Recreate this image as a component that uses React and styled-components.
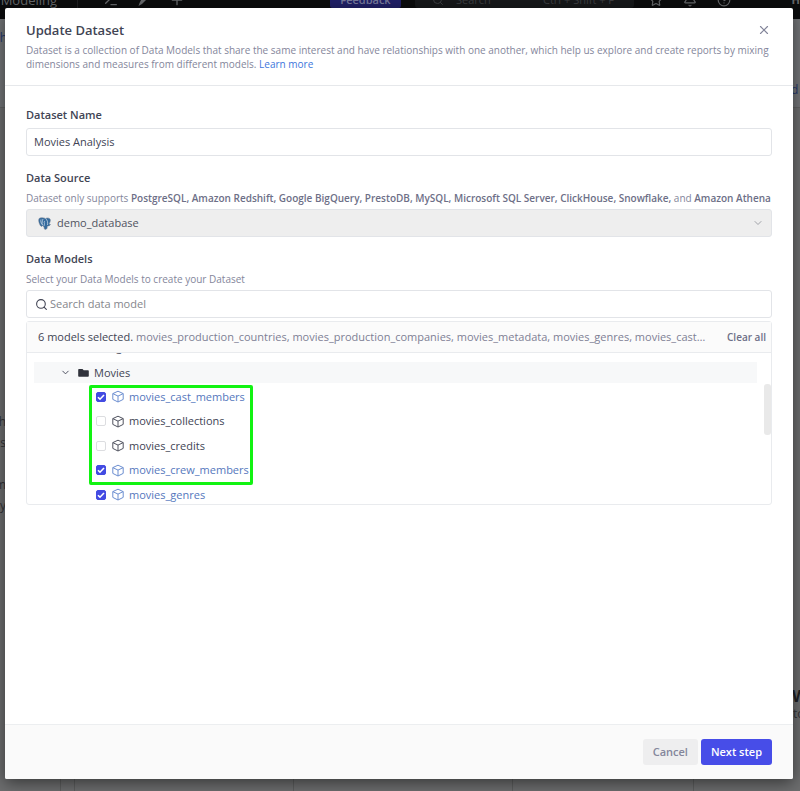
import React, { useState } from "react";
import styled, { createGlobalStyle, css } from "styled-components";
import { Terminal, Plus, Search, Star, Bell, CircleHelp, X, ChevronDown } from "lucide-react";

const Global = createGlobalStyle`
  * { box-sizing: border-box; }
  body { margin: 0; background: #6b6b6b; font-family: "Open Sans", "Noto Sans", sans-serif; font-size: 11px; line-height: 18px; color: #414454; }
  button, input, select { font: inherit; color: inherit; }
`;

const Page = styled.div`
  position: fixed;
  inset: 0;
  overflow: hidden;
  background: #6d6e6f;
  display: flex;
  flex-direction: column;
`;
const NavBar = styled.nav`
  display: flex;
  align-items: center;
  flex: none;
  height: 38px;
  margin-top: -19px;
  background: #0b0c0d;
  color: #66686b;
`;
const NavTitle = styled.div`
  width: 78px;
  border-right: 1px solid #1e1f21;
  font-size: 13px;
  text-indent: -6px;
  white-space: nowrap;
`;
const NavTools = styled.div`
  display: flex;
  align-items: center;
  flex: 1;
  gap: 18px;
  padding-left: 25px;
`;
const FeedbackButton = styled.button`
  width: 71px;
  height: 16px;
  padding: 0;
  border: 0;
  border-radius: 2px;
  background: #202067;
  color: #777a9c;
  font-weight: 600;
  line-height: 16px;
`;
const NavSearch = styled.div`
  display: flex;
  align-items: center;
  gap: 12px;
  width: 219px;
  height: 16px;
  margin-left: 14px;
  padding: 0 20px 0 17px;
  border-radius: 3px;
  background: #16181a;
  color: #3c3e41;
  span:last-child { margin-left: auto; }
`;
const NavActions = styled.div`
  display: flex;
  align-items: center;
  gap: 20px;
  width: 166px;
  padding-left: 15px;
  b { margin-left: auto; }
`;
const Backdrop = styled.div`
  display: flex;
  flex: 1;
  justify-content: space-between;
  background: linear-gradient(#737578 88px, #626364 88px, #626364 89px, #6d6e6f 89px);
`;
const BackColumn = styled.div`
  position: relative;
  width: 30px;
`;
const BackText = styled.span`
  position: absolute;
  top: ${(p) => p.$y}px;
  ${(p) => (p.$right ? "left" : "right")}: ${(p) => p.$x}px;
  color: ${(p) => p.$color || "#333438"};
  font-size: ${(p) => p.$size || 12}px;
  font-weight: ${(p) => (p.$bold ? 700 : 400)};
  white-space: nowrap;
`;
const BackGrid = styled.div`
  display: grid;
  flex: none;
  grid-template-columns: 61fr 14fr 219fr 219fr 181fr 106fr;
  height: 30px;
  div { border-right: 1px solid #5d5e5e; }
`;

const Overlay = styled.div`
  position: fixed;
  inset: 0;
  display: flex;
  padding: 8px 7px 12px 5px;
`;
const Dialog = styled.section`
  display: flex;
  flex: 1;
  flex-direction: column;
  min-width: 0;
  overflow: hidden;
  border-radius: 2px;
  background: #fff;
  box-shadow: 0 4px 16px rgba(0, 0, 0, 0.5);
`;
const Header = styled.header`
  padding: 12px 16px 14px 21px;
  border-bottom: 1px solid #e6e8eb;
`;
const TitleRow = styled.div`
  display: flex;
  align-items: center;
  justify-content: space-between;
  padding-right: 5px;
`;
const Title = styled.h1`
  margin: 0;
  font-size: 13px;
  font-weight: 600;
  line-height: 20px;
`;
const Intro = styled.p`
  margin: 3px 0 0;
  color: #84869b;
  font-size: 10px;
  line-height: 14px;
  a { color: #3d76dc; text-decoration: none; }
`;
const CloseButton = styled.button`
  display: flex;
  padding: 0 1px;
  border: 0;
  background: none;
  color: #84869b;
`;
const Body = styled.form`
  display: flex;
  flex: 1;
  flex-direction: column;
  padding: 19px 21px;
`;
const Label = styled.label`
  font-weight: 600;
  line-height: 20px;
  ${(p) => p.$spaced && css`margin-top: 12px;`}
`;
const Hint = styled.p`
  margin: 2px 0 3px;
  color: #84869b;
  font-size: 10px;
  line-height: 16px;
  b { color: #6d6f87; font-weight: 600; }
`;
const field = css`
  height: 28px;
  border: 1px solid #e2e4e8;
  border-radius: 3px;
`;
const TextInput = styled.input`
  ${field}
  width: 100%;
  margin-top: 3px;
  padding: 0 7px 1px;
  background: #fff;
`;
const SelectBox = styled.div`
  ${field}
  display: flex;
  align-items: center;
  gap: 6px;
  padding: 0 7px 0 11px;
  background: #eee;
  color: #a0a2a8;
`;
const Select = styled.select`
  flex: 1;
  padding: 0;
  border: 0;
  appearance: none;
  background: none;
  color: #50535f;
  opacity: 1;
`;
const SearchBox = styled.div`
  ${field}
  display: flex;
  align-items: center;
  gap: 2px;
  padding: 0 8px;
  input { flex: 1; min-width: 0; padding: 0; border: 0; outline: 0; background: none; }
  input::placeholder { color: #85868c; opacity: 1; }
`;
const Picker = styled.div`
  margin-top: 3px;
  border: 1px solid #e9ebee;
  border-radius: 3px;
`;
const Summary = styled.div`
  display: flex;
  align-items: center;
  height: 31px;
  padding: 0 5px 0 11px;
  border-bottom: 1px solid #e9ebee;
  background: #fbfbfb;
`;
const SummaryText = styled.div`
  flex: 1;
  min-width: 0;
  overflow: hidden;
  color: #7e8095;
  text-overflow: ellipsis;
  white-space: nowrap;
  span { color: #414454; }
`;
const ClearButton = styled.button`
  padding: 0;
  margin-left: 18px;
  border: 0;
  background: none;
  color: #6d6f87;
  font-size: 10px;
  font-weight: 600;
`;
const TreeArea = styled.div`
  position: relative;
  height: 151px;
  padding: 9px 14px 0 7px;
  overflow: hidden;
`;
const ScrollThumb = styled.div`
  position: absolute;
  top: 31px;
  right: 0;
  width: 7px;
  height: 51px;
  border-radius: 3px;
  background: #e9e9e9;
`;
const ClippedRow = styled.div`
  position: absolute;
  top: -15px;
  left: 43px;
`;
const FolderRow = styled.div`
  display: flex;
  align-items: center;
  height: 21px;
  margin-bottom: 1px;
  padding-left: 26px;
  background: #f7f8f9;
  svg:first-child { margin-right: 7px; }
  span { margin-left: 5px; }
`;
const ModelList = styled.div`
  position: relative;
  display: flex;
  flex-direction: column;
  align-items: flex-start;
  padding-left: 62px;
`;
const Highlight = styled.div`
  position: absolute;
  top: 1px;
  left: 55px;
  width: 164px;
  height: 100px;
  border: 3px solid #12f312;
  border-radius: 2px;
  pointer-events: none;
`;
const ModelRow = styled.label`
  display: grid;
  grid-template-columns: 10px 12px auto;
  align-items: center;
  column-gap: 6px;
  height: ${(p) => (p.$tall ? 25 : 24)}px;
  color: ${(p) => (p.$on ? "#5577bd" : "#414454")};
  svg { color: ${(p) => (p.$on ? "#6c8ed0" : "#50535f")}; }
  span { margin-left: -1px; }
`;
const Check = styled.input`
  width: 10px;
  height: 10px;
  margin: 0;
  border: 1px solid #dcdde0;
  border-radius: 2px;
  appearance: none;
  background: #fff;
  &:checked {
    border-color: #434be2;
    background: #434be2 url("data:image/svg+xml,%3Csvg xmlns='http://www.w3.org/2000/svg' viewBox='0 0 10 10'%3E%3Cpath d='M2 5.2l2 2L8 3' fill='none' stroke='white' stroke-width='1.6'/%3E%3C/svg%3E") center / 10px;
  }
`;
const Footer = styled.footer`
  display: flex;
  align-items: center;
  justify-content: flex-end;
  gap: 3px;
  height: 55px;
  padding: 0 21px;
  border-top: 1px solid #eceef0;
  background: #fafafa;
`;
const Action = styled.button`
  height: 26px;
  padding: 0 10px;
  border: 0;
  border-radius: 3px;
  background: ${(p) => (p.$primary ? "#474de8" : "#eeeeef")};
  color: ${(p) => (p.$primary ? "#fff" : "#84869b")};
  font-weight: 600;
`;

const PostgresLogo = () => (
  <svg width="13" height="13" viewBox="0 0 26 26" aria-hidden="true">
    <path d="M4 2C0 3 1 10 4 16c2 4 4 3 5 1 1 2 2 2 3 2 0 6 2 7 5 5 2-1 1-4 2-6 3 0 5-1 6-3l-3-1c3-5 4-9 1-11-3-2-6-1-8 0-4-2-8-2-11-1z" fill="#356b9e" stroke="#7b8794" strokeWidth="1" />
    <path d="M9 16c-1-3-1-8 1-12M15 3c4 3 5 8 4 13M12 18l1-5c-1-2-1-4 1-5M6 5c-1 3 0 7 2 10" fill="none" stroke="#d5e2ee" strokeWidth="1.4" />
  </svg>
);
const CubeIcon = () => (
  <svg width="12" height="13" viewBox="0 0 12 13" fill="none" stroke="currentColor" strokeLinejoin="round" aria-hidden="true">
    <path d="M6 1.2 11.2 3.6V9.4L6 12 .8 9.4V3.6zM.8 3.6 6 6.1l5.2-2.5M6 6.1V12" />
  </svg>
);
const FolderIcon = () => (
  <svg width="11" height="11" viewBox="0 0 11 11" fill="#30323b" aria-hidden="true">
    <path d="M1 2h3.5l1.2 1.3H10a.8.8 0 0 1 .8.8V9a.8.8 0 0 1-.8.8H1A.8.8 0 0 1 .2 9V2.8A.8.8 0 0 1 1 2z" />
  </svg>
);
const BrushIcon = () => (
  <svg width="14" height="14" viewBox="0 0 14 14" fill="currentColor" aria-hidden="true">
    <path d="M1.5 13c1-4 3-7.500 6.500-10.500 2-1.500 4-2 5-1.500 0 2-1.500 4-3.500 5.500L5 11z" />
  </svg>
);

const models = ["movies_cast_members", "movies_collections", "movies_credits", "movies_crew_members", "movies_genres"];

export default function App() {
  const [chosen, setChosen] = useState(["movies_cast_members", "movies_crew_members", "movies_genres"]);
  const toggle = (name) => setChosen((all) => (all.includes(name) ? all.filter((n) => n !== name) : [...all, name]));
  return (
    <>
      <Global />
      <Page aria-hidden="true">
        <NavBar>
          <NavTitle>l Modeling</NavTitle>
          <NavTools><Terminal size={16} /><BrushIcon /><Plus size={16} /></NavTools>
          <FeedbackButton>Feedback</FeedbackButton>
          <NavSearch><Search size={12} /><span>Search</span><span>Ctrl + Shift + F</span></NavSearch>
          <NavActions><Star size={14} /><Bell size={14} /><CircleHelp size={14} /><b>H</b></NavActions>
        </NavBar>
        <Backdrop>
          <BackColumn>
            <BackText $y={10} $x={23} $color="#26386c">Th</BackText>
            <BackText $y={394} $x={24}>h</BackText>
            <BackText $y={415} $x={24}>as</BackText>
            <BackText $y={457} $x={24}>m</BackText>
            <BackText $y={478} $x={24}>y</BackText>
          </BackColumn>
          <BackColumn>
            <BackText $right $y={62} $x={21} $color="#26386c">d</BackText>
            <BackText $right $y={668} $x={22} $size={16} $bold $color="#1f2024">W</BackText>
            <BackText $right $y={686} $x={23}>to</BackText>
          </BackColumn>
        </Backdrop>
        <BackGrid><div /><div /><div /><div /><div /></BackGrid>
      </Page>
      <Overlay>
        <Dialog role="dialog" aria-labelledby="dialog-title">
          <Header>
            <TitleRow>
              <Title id="dialog-title">Update Dataset</Title>
              <CloseButton aria-label="Close"><X size={14} strokeWidth={2} /></CloseButton>
            </TitleRow>
            <Intro>
              Dataset is a collection of Data Models that share the same interest and have relationships with one another, which help us explore and create reports by mixing dimensions and measures from different models. <a href="#learn">Learn more</a>
            </Intro>
          </Header>
          <Body onSubmit={(e) => e.preventDefault()}>
            <Label htmlFor="name">Dataset Name</Label>
            <TextInput id="name" defaultValue="Movies Analysis" />
            <Label htmlFor="source" $spaced>Data Source</Label>
            <Hint>Dataset only supports <b>PostgreSQL, Amazon Redshift, Google BigQuery, PrestoDB, MySQL, Microsoft SQL Server, ClickHouse, Snowflake,</b> and <b>Amazon Athena</b></Hint>
            <SelectBox>
              <PostgresLogo />
              <Select id="source" disabled><option>demo_database</option></Select>
              <ChevronDown size={12} />
            </SelectBox>
            <Label htmlFor="search" $spaced>Data Models</Label>
            <Hint>Select your Data Models to create your Dataset</Hint>
            <SearchBox><Search size={13} /><input id="search" placeholder="Search data model" /></SearchBox>
            <Picker>
              <Summary>
                <SummaryText><span>6 models selected.</span> movies_production_countries, movies_production_companies, movies_metadata, movies_genres, movies_cast_members, movies_crew_members</SummaryText>
                <ClearButton type="button" onClick={() => setChosen([])}>Clear all</ClearButton>
              </Summary>
              <TreeArea>
                <ClippedRow>Marketing</ClippedRow>
                <FolderRow><ChevronDown size={11} /><FolderIcon /><span>Movies</span></FolderRow>
                <ModelList>
                  {models.map((name, i) => (
                    <ModelRow key={name} $on={chosen.includes(name)} $tall={i % 2 === 0}>
                      <Check type="checkbox" checked={chosen.includes(name)} onChange={() => toggle(name)} />
                      <CubeIcon />
                      <span>{name}</span>
                    </ModelRow>
                  ))}
                  <Highlight />
                </ModelList>
                <ScrollThumb />
              </TreeArea>
            </Picker>
          </Body>
          <Footer><Action>Cancel</Action><Action $primary>Next step</Action></Footer>
        </Dialog>
      </Overlay>
    </>
  );
}
